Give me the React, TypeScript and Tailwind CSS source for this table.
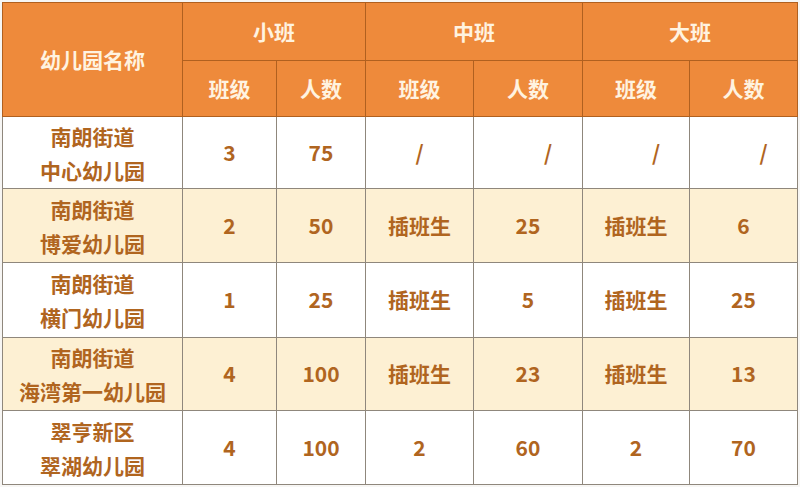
import React from 'react';

type Row = {
  name: [string, string];
  cells: string[];
  shaded: boolean;
};

const rows: Row[] = [
  { name: ['南朗街道', '中心幼儿园'], cells: ['3', '75', '/', '/', '/', '/'], shaded: false },
  { name: ['南朗街道', '博爱幼儿园'], cells: ['2', '50', '插班生', '25', '插班生', '6'], shaded: true },
  { name: ['南朗街道', '横门幼儿园'], cells: ['1', '25', '插班生', '5', '插班生', '25'], shaded: false },
  { name: ['南朗街道', '海湾第一幼儿园'], cells: ['4', '100', '插班生', '23', '插班生', '13'], shaded: true },
  { name: ['翠亨新区', '翠湖幼儿园'], cells: ['4', '100', '2', '60', '2', '70'], shaded: false },
];

const rowHeights = ['h-[72px]', 'h-[74px]', 'h-[75px]', 'h-[73px]', 'h-[74px]'];

const headCell = 'border border-[#b0601f] text-[#fff3e0] font-bold text-[21px] text-center align-middle';
const bodyCell = 'border border-[#8f877c] text-[#b0651f] font-bold text-[21px] text-center align-middle';

const App: React.FC = () => {
  return (
    <div
      className="w-[800px] h-[487px] bg-[#f7f6f4] pt-[2px] pl-[2px]"
      style={{ fontFamily: '"Noto Sans CJK SC", "Noto Sans", sans-serif' }}
    >
      <table className="border-collapse table-fixed w-[795px]">
        <colgroup>
          <col className="w-[180px]" />
          <col className="w-[94px]" />
          <col className="w-[89px]" />
          <col className="w-[108px]" />
          <col className="w-[109px]" />
          <col className="w-[107px]" />
          <col className="w-[108px]" />
        </colgroup>
        <thead className="bg-[#ee8a3b]">
          <tr className="h-[58px]">
            <th rowSpan={2} className={headCell}>
              幼儿园名称
            </th>
            <th colSpan={2} className={headCell}>
              小班
            </th>
            <th colSpan={2} className={headCell}>
              中班
            </th>
            <th colSpan={2} className={headCell}>
              大班
            </th>
          </tr>
          <tr className="h-[56px]">
            <th className={headCell}>班级</th>
            <th className={headCell}>人数</th>
            <th className={headCell}>班级</th>
            <th className={headCell}>人数</th>
            <th className={headCell}>班级</th>
            <th className={headCell}>人数</th>
          </tr>
        </thead>
        <tbody>
          {rows.map((row, i) => (
            <tr key={i} className={`${rowHeights[i]} ${row.shaded ? 'bg-[#fdf0d3]' : 'bg-white'}`}>
              <td className={`${bodyCell} leading-[34px]`}>
                <div>{row.name[0]}</div>
                <div>{row.name[1]}</div>
              </td>
              {row.cells.map((c, j) => (
                <td
                  key={j}
                  className={`${bodyCell} ${c === '/' && j > 2 ? 'pl-[40px]' : ''}`}
                >
                  {c}
                </td>
              ))}
            </tr>
          ))}
        </tbody>
      </table>
    </div>
  );
};

export default App;
